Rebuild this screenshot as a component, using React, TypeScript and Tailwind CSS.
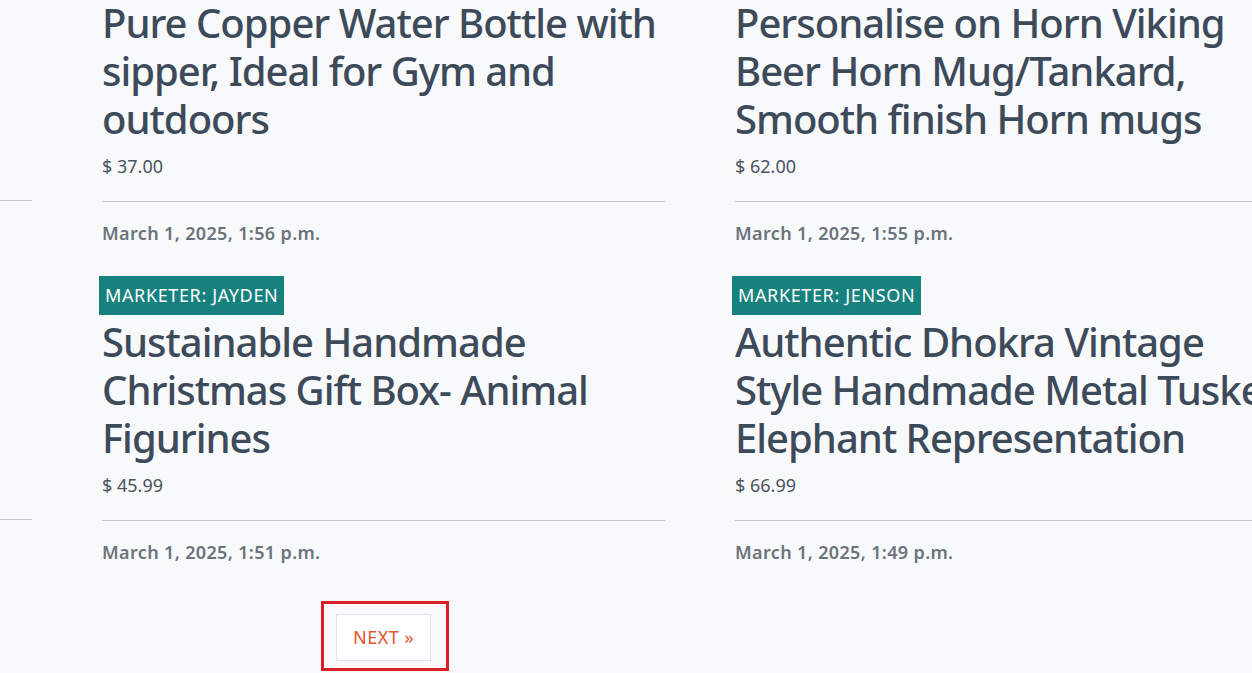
const posts = [
  {
    marketer: 'JAYDEN',
    title: 'Pure Copper Water Bottle with sipper, Ideal for Gym and outdoors',
    price: '$ 37.00',
    date: 'March 1, 2025, 1:56 p.m.',
  },
  {
    marketer: 'JENSON',
    title: 'Personalise on Horn Viking Beer Horn Mug/Tankard, Smooth finish Horn mugs',
    price: '$ 62.00',
    date: 'March 1, 2025, 1:55 p.m.',
  },
  {
    marketer: 'JAYDEN',
    title: 'Sustainable Handmade Christmas Gift Box- Animal Figurines',
    price: '$ 45.99',
    date: 'March 1, 2025, 1:51 p.m.',
  },
  {
    marketer: 'JENSON',
    title: 'Authentic Dhokra Vintage Style Handmade Metal Tusked Elephant Representation',
    price: '$ 66.99',
    date: 'March 1, 2025, 1:49 p.m.',
  },
]

function Post({ p }: { p: (typeof posts)[number] }) {
  return (
    <div className="flex h-[319px] flex-col">
      <div className="flex">
        <span className="-ml-[3px] bg-[#17817e] px-[6px] py-[6px] text-[18px] leading-[27px] tracking-[0.035em] text-white">
          MARKETER: {p.marketer}
        </span>
      </div>
      <h2 className="mt-[3px] text-[40px] leading-[48px] font-medium tracking-[-0.025em] text-[#3d4a5a]">
        {p.title}
      </h2>
      <p className="mt-[10px] text-[18px] leading-[27px] text-[#4a5260]">{p.price}</p>
      <div className="mt-[21px] h-px bg-[#c4c7cc]" />
      <p className="mt-[18px] text-[18px] leading-[27px] font-semibold tracking-[0.02em] text-[#6b737d]">
        {p.date}
      </p>
    </div>
  )
}

function Column({ items }: { items: typeof posts }) {
  return (
    <div className="w-[563px] shrink-0">
      {items.map((p, i) => (
        <Post key={i} p={p} />
      ))}
    </div>
  )
}

function Stub() {
  return (
    <div className="w-[563px] shrink-0">
      {[0, 1].map((i) => (
        <div key={i} className="h-[319px] pt-[243px]">
          <div className="h-px bg-[#c4c7cc]" />
        </div>
      ))}
    </div>
  )
}

export default function App() {
  return (
    <div
      className="h-[673px] w-[1252px] overflow-hidden bg-[#f8f9fb]"
      style={{ fontFamily: '"Noto Sans", "Open Sans", sans-serif' }}
    >
      <div className="-mt-[43px] flex gap-[70px] pl-[102px]">
        <div className="-ml-[633px] flex">
          <Stub />
        </div>
        <Column items={[posts[0], posts[2]]} />
        <Column items={[posts[1], posts[3]]} />
      </div>
      <div className="mt-[6px] flex pl-[321px]">
        <div className="border-[3px] border-[#dc1f26] pt-[10px] pr-[15px] pb-[7px] pl-[12px]">
          <button className="border border-[#dee2e6] bg-white px-[16px] py-[9px] text-[18px] leading-[27px] tracking-[0.03em] text-[#e0552b]">
            NEXT »
          </button>
        </div>
      </div>
    </div>
  )
}
